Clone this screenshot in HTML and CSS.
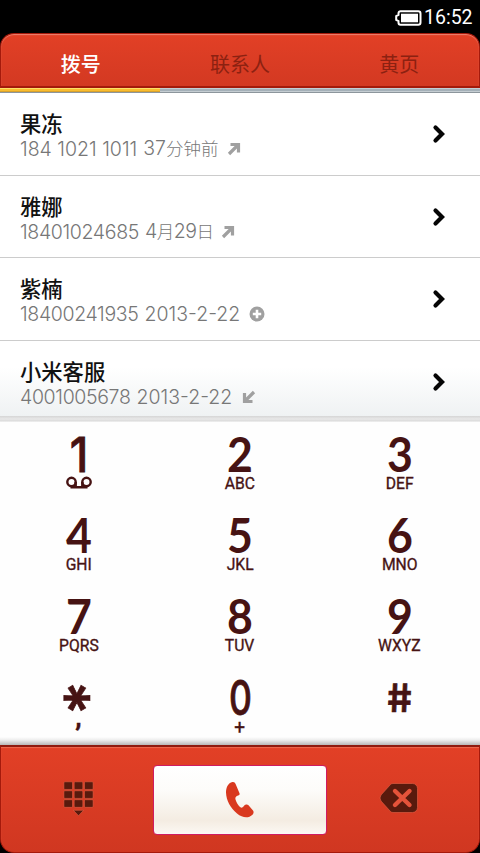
FILE: index.html
```html
<!DOCTYPE html>
<html lang="zh-CN">
<head>
<meta charset="utf-8">
<title>拨号</title>
<link rel="stylesheet" href="styles.css">
</head>
<body>
<div class="phone">
  <header class="status">
    <svg class="battery" width="27" height="16" viewBox="0 0 27 16"><path d="M5.500 1.200H23.200a2.300 2.300 0 0 1 2.300 2.300v9a2.300 2.300 0 0 1-2.300 2.300H5.500a2 2 0 0 1-2-2V11.200L1.200 10V6L3.500 4.800V3.200A2 2 0 0 1 5.500 1.200Z" fill="none" stroke="#fff" stroke-width="2"/><rect x="6" y="3.700" width="17" height="8.600" fill="#fff"/></svg>
    <span class="clock">16:52</span>
  </header>
  <nav class="tabs">
    <span class="tab active">拨号</span>
    <span class="tab">联系人</span>
    <span class="tab">黄页</span>
  </nav>
  <div class="track"><div class="thumb"></div></div>
  <main class="calls">
    <div class="call">
      <div class="info"><div class="name">果冻</div><div class="meta"><span class="num">184 1021 1011</span><span class="date">37<span class="unit">分钟前</span></span><svg class="kind" width="14" height="14" viewBox="0 0 14 14"><path d="M3.500 2.500H11.500V10.500M11 3L2 12" fill="none" stroke="#a0a0a0" stroke-width="3.200"/></svg></div></div>
      <svg class="chev" width="14" height="20" viewBox="0 0 14 20"><path d="M3.500 3.500L10 10L3.500 16.500" fill="none" stroke="#050505" stroke-width="4.200" stroke-linecap="round"/></svg>
    </div>
    <div class="call">
      <div class="info"><div class="name">雅娜</div><div class="meta"><span class="num tight">18401024685</span><span class="date narrow">4<span class="unit">月</span>29<span class="unit">日</span></span><svg class="kind" width="14" height="14" viewBox="0 0 14 14"><path d="M3.500 2.500H11.500V10.500M11 3L2 12" fill="none" stroke="#a0a0a0" stroke-width="3.200"/></svg></div></div>
      <svg class="chev" width="14" height="20" viewBox="0 0 14 20"><path d="M3.500 3.500L10 10L3.500 16.500" fill="none" stroke="#050505" stroke-width="4.200" stroke-linecap="round"/></svg>
    </div>
    <div class="call">
      <div class="info"><div class="name">紫楠</div><div class="meta"><span class="num tight">18400241935</span><span class="date">2013-2-22</span><svg class="kind near" width="16" height="16" viewBox="0 0 16 16"><circle cx="8" cy="8" r="7.500" fill="#a0a0a0"/><path d="M8 3.800V12.200M3.800 8H12.200" stroke="#fff" stroke-width="2.600"/></svg></div></div>
      <svg class="chev" width="14" height="20" viewBox="0 0 14 20"><path d="M3.500 3.500L10 10L3.500 16.500" fill="none" stroke="#050505" stroke-width="4.200" stroke-linecap="round"/></svg>
    </div>
    <div class="call last">
      <div class="info"><div class="name">小米客服</div><div class="meta"><span class="num tight">4001005678</span><span class="date">2013-2-22</span><svg class="kind in" width="14" height="14" viewBox="0 0 14 14"><path d="M2.500 3V11.500H10.500M3 11L12 2" fill="none" stroke="#a0a0a0" stroke-width="3.200"/></svg></div></div>
      <svg class="chev" width="14" height="20" viewBox="0 0 14 20"><path d="M3.500 3.500L10 10L3.500 16.500" fill="none" stroke="#050505" stroke-width="4.200" stroke-linecap="round"/></svg>
    </div>
  </main>
  <div class="ledge"></div>
  <section class="pad">
    <div class="key"><span class="digit one">1</span><svg class="vm" width="26" height="14" viewBox="0 0 26 14"><circle cx="5.500" cy="6" r="4.200"/><circle cx="20.500" cy="6" r="4.200"/><path d="M4.500 11.300H21.500M9.700 6V11M16.300 6V11"/></svg></div>
    <div class="key"><span class="digit">2</span><span class="abc">ABC</span></div>
    <div class="key"><span class="digit">3</span><span class="abc">DEF</span></div>
    <div class="key"><span class="digit">4</span><span class="abc">GHI</span></div>
    <div class="key"><span class="digit">5</span><span class="abc">JKL</span></div>
    <div class="key"><span class="digit">6</span><span class="abc">MNO</span></div>
    <div class="key"><span class="digit">7</span><span class="abc">PQRS</span></div>
    <div class="key"><span class="digit">8</span><span class="abc">TUV</span></div>
    <div class="key"><span class="digit">9</span><span class="abc">WXYZ</span></div>
    <div class="key"><span class="digit star">*</span><span class="abc comma">,</span></div>
    <div class="key"><span class="digit zero">0</span><span class="abc plus">+</span></div>
    <div class="key"><span class="digit hash">#</span></div>
  </section>
  <div class="shade"></div>
  <footer class="bar">
    <svg class="grid" width="31" height="36" viewBox="0 0 30 35"><g fill="#591a0d" stroke="#ea6a4e" stroke-width=".5"><rect x=".8" y=".8" width="8.400" height="7.400" rx="1"/><rect x="10.800" y=".8" width="8.400" height="7.400" rx="1"/><rect x="20.800" y=".8" width="8.400" height="7.400" rx="1"/><rect x=".8" y="9.500" width="8.400" height="7.400" rx="1"/><rect x="10.800" y="9.500" width="8.400" height="7.400" rx="1"/><rect x="20.800" y="9.500" width="8.400" height="7.400" rx="1"/><rect x=".8" y="18.200" width="8.400" height="7.400" rx="1"/><rect x="10.800" y="18.200" width="8.400" height="7.400" rx="1"/><rect x="20.800" y="18.200" width="8.400" height="7.400" rx="1"/><path d="M10 28.500H20L15 33.700Z"/></g></svg>
    <div class="dial"><svg width="30" height="38" viewBox="0 0 30 38"><path d="M7.500 1C9 .7 10 1.500 10.700 3.200L14.500 12.200C15 13.500 14.300 14 13 14.500C10.500 15.500 10 16.500 10.500 18.500C11.500 22 13 24 15 26C16.500 27 17.500 26.800 18.500 25.500C20 23.500 22 23 23.500 24.300L28 29.500C29 31 28.700 32.500 27.500 33.700C23.500 37.500 17.500 37 12 32.500C5.500 27 1.300 19.500 1 11.500C1 6.500 3 2 7.500 1Z" fill="#d9391f"/></svg></div>
    <svg class="del" width="40" height="32" viewBox="0 0 40 32"><path d="M14 1.500H33.500a5 5 0 0 1 5 5V25.500a5 5 0 0 1-5 5H14Q12.500 30.500 11.500 29.500L2 19Q0 16 2 13L11.500 2.500Q12.500 1.500 14 1.500Z" fill="#591a0d" stroke="#e66247" stroke-width=".6"/><path d="M16 9L30.500 23M30.500 9L16 23" stroke="#e5533a" stroke-width="4.400" stroke-linecap="round"/></svg>
  </footer>
</div>
</body>
</html>
```
FILE: styles.css
```css
* { box-sizing: border-box; }
body { margin: 0; background: #000; font-family: "Noto Sans CJK SC", sans-serif; }
.phone { width: 480px; height: 853px; display: flex; flex-direction: column; overflow: hidden; }
svg { display: block; flex: none; }
.status { height: 33px; display: flex; justify-content: flex-end; align-items: center; padding: 3px 8px 0 0; gap: 2px; color: #fff; }
.clock { font: 19.500px/24px Roboto, sans-serif; width: 48px; white-space: nowrap; }
.tabs { height: 55px; display: grid; grid-template-columns: repeat(3, 1fr); border: 1px solid #a51a0c; border-bottom: 2px solid #a31a0b; border-radius: 14px 14px 0 0; background: linear-gradient(#e24026, #d33922); box-shadow: inset 0 1px 1px #ee8170; }
.tab { font-size: 20px; line-height: 59px; text-align: center; color: #8c2111; height: 52px; }
.active { color: #fff; font-weight: 500; }
.track { height: 5px; background: linear-gradient(#c3ced6 0 1px, #a4b0b8 1px 3px, #c5cdd2 3px 4px, #8c969c 4px); }
.thumb { width: 160px; height: 4px; background: linear-gradient(#ffe066 0 1px, #f8bc2f 1px 3px, #d8a12c 3px); }
.calls { height: 323px; background: #fff; display: flex; flex-direction: column; }
.call { height: 82.700px; flex: none; display: flex; align-items: center; justify-content: space-between; padding: 2px 34px 0 20px; border-bottom: 1px solid #ccc; }
.chev { margin-top: -2px; }
.last { height: 75px; border: 0; padding-top: 0; align-items: flex-start; background: linear-gradient(#fff 35%, #eff2f3); }
.last .info { padding-top: 16px; }
.last .chev { margin-top: 31px; }
.name { font-size: 21.300px; line-height: 28px; font-weight: 500; color: #111; }
.meta { height: 24px; display: flex; align-items: center; font: 300 19.500px/24px Inter, "Noto Sans CJK SC", sans-serif; color: #777; white-space: nowrap; }
.num, .date { white-space: nowrap; flex: none; }
.tight { letter-spacing: -.35px; }
.narrow { letter-spacing: -.5px; }
.unit { font-size: 17.500px; }
.date { margin-left: 6px; }
.kind { margin-left: 8px; }
.near { margin-left: 9px; }
.in { margin-left: 10px; }
.ledge { height: 6px; background: linear-gradient(#d5d5d5, #e8e8e8 50%, #dcdcdc 80%, #f5f5f5); }
.pad { height: 315px; background: #fefefe; display: grid; grid-template-columns: 157px 166px 153px; grid-auto-rows: 81px; padding-top: 12px; color: #461313; }
.key { display: flex; flex-direction: column; align-items: center; }
.digit { font: 700 48px/40px Lato, sans-serif; height: 42px; transform: scaleX(.93); }
.one { font: 500 48px/42px Inter, sans-serif; -webkit-text-stroke: .8px #461313; }
.zero { font: 500 48px/41px Inter, sans-serif; transform: scaleX(.74); -webkit-text-stroke: .8px #461313; }
.abc { font: 400 16.500px/16px Roboto, sans-serif; -webkit-text-stroke: .35px #461313; transform: translateY(-.5px) scaleX(.95); }
.vm { fill: none; stroke: #461313; stroke-width: 2.400; }
.star { font: 600 64px/42px Inter, sans-serif; transform: translateX(-12px) rotate(90deg); -webkit-text-stroke: .6px #461313; }
.comma { font-weight: 900; font-size: 24px; transform: translateY(-9px); }
.plus { font-size: 20px; }
.hash { font: 600 39px/42px Inter, sans-serif; transform: skewX(7deg); -webkit-text-stroke: .6px #461313; }
.shade { height: 8px; background: linear-gradient(#fefefe, #ececec 40%, #b8b8b8); }
.bar { height: 108px; border: 1px solid #a51a0c; border-top: 2px solid #8f1b0f; border-radius: 0 0 14px 14px; background: linear-gradient(#e24026, #d03721); box-shadow: inset 0 1px 1px #ee6a50; display: flex; align-items: center; padding: 0 60px 0 62px; }
.grid { margin-right: 59px; margin-top: -2px; }
.del { margin-left: 52px; margin-top: -4px; }
.dial { width: 174px; height: 70px; border: 1px solid #cf1c62; border-radius: 4px; background: linear-gradient(#fff, #fdfcfa 35%, #f4ece2 80%, #fbf8f3); display: flex; align-items: center; justify-content: center; }
```
